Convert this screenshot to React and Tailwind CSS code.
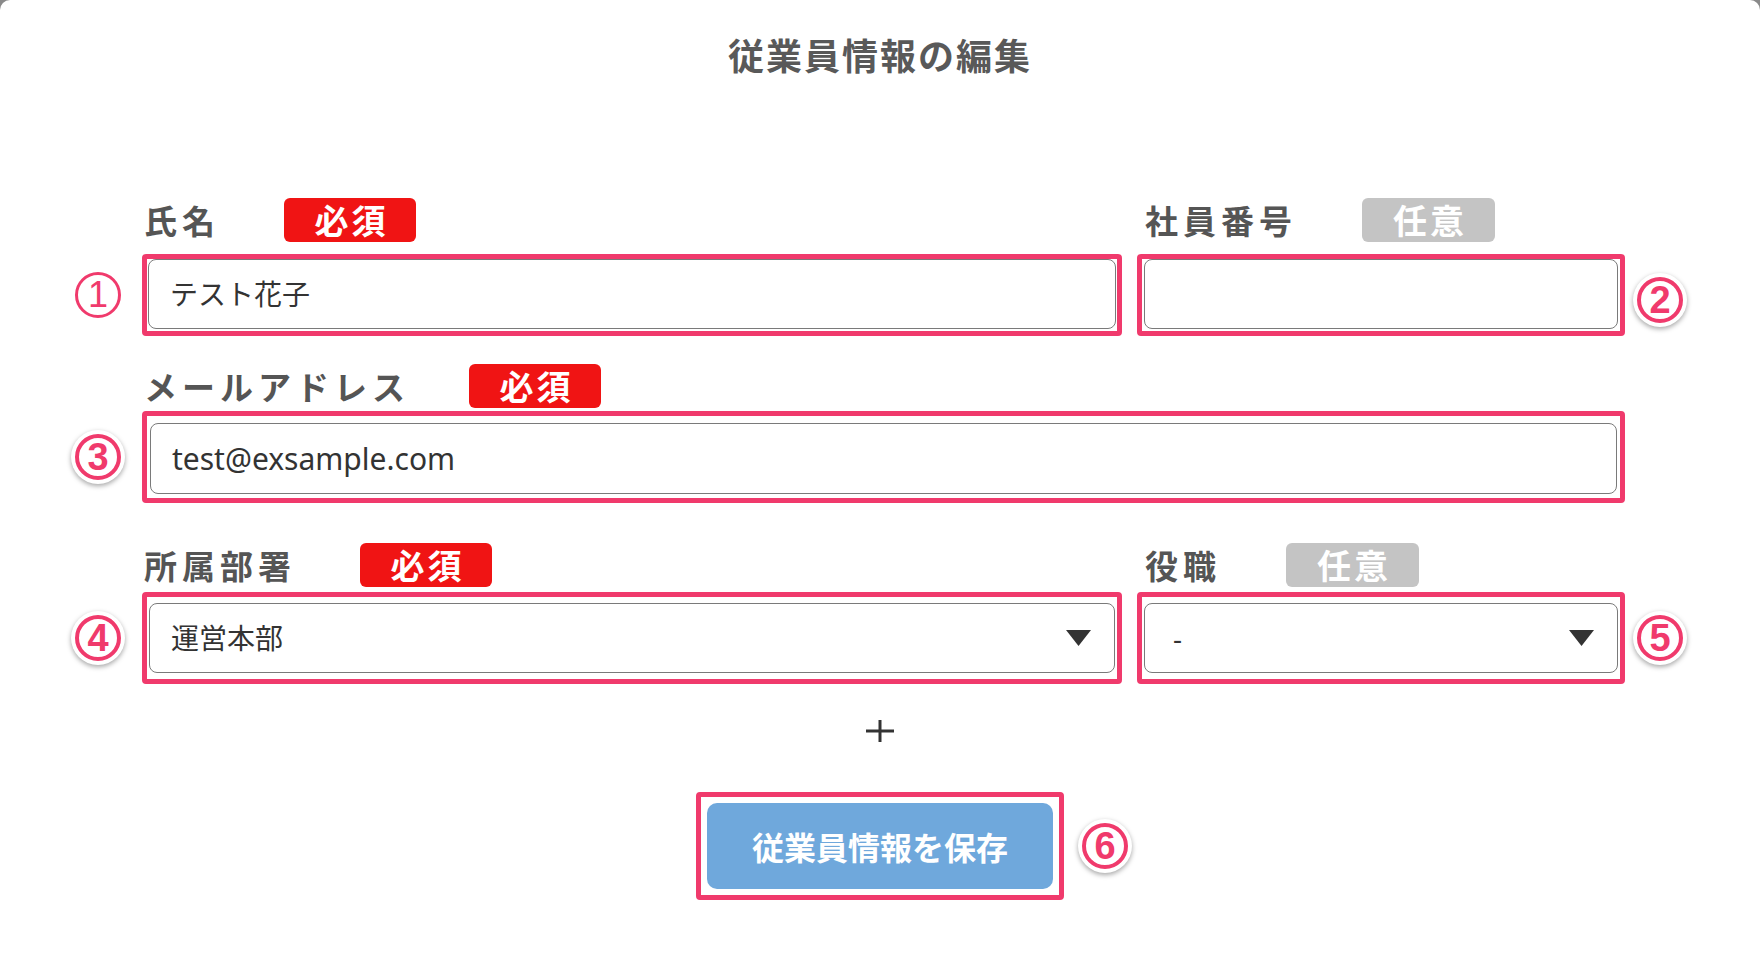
import React from "react";

const CJK = { fontFamily: '"Noto Sans CJK JP", "Noto Sans", sans-serif' };
const INPUT_FONT = { fontFamily: '"Noto Sans", "Noto Sans CJK JP", sans-serif' };
const NUM_FONT = { fontFamily: '"Liberation Sans", Arial, sans-serif' };

function Sticker({ n }) {
  return (
    <div className="w-[54px] h-[54px] rounded-full bg-white shadow-[0_2px_5px_rgba(0,0,0,0.35)] flex items-center justify-center">
      <div
        className="w-[46px] h-[46px] rounded-full border-[4px] border-[#f03a6c] flex items-center justify-center text-[#f03a6c] font-bold text-[38px] leading-none"
        style={NUM_FONT}
      >
        {n}
      </div>
    </div>
  );
}

function ThinCircle({ n }) {
  return (
    <div className="w-[54px] h-[54px] flex items-center justify-center">
      <div
        className="w-[46px] h-[46px] rounded-full border-[3px] border-[#f03a6c] flex items-center justify-center text-[#f03a6c] font-normal text-[36px] leading-none"
        style={NUM_FONT}
      >
        {n}
      </div>
    </div>
  );
}

function Label({ children }) {
  return (
    <span className="text-[33px] leading-none font-bold tracking-[5px] text-[#555555]" style={CJK}>
      {children}
    </span>
  );
}

function Required({ wide }) {
  return (
    <span
      className={
        (wide ? "ml-[59px] " : "ml-[64px] ") +
        "w-[132px] h-[44px] rounded-[6px] bg-[#f01414] text-white text-[34px] leading-none font-bold tracking-[3px] pl-[3px] flex items-center justify-center"
      }
      style={CJK}
    >
      必須
    </span>
  );
}

function Optional() {
  return (
    <span
      className="ml-[65px] w-[133px] h-[44px] rounded-[6px] bg-[#c4c4c4] text-white text-[34px] leading-none font-bold tracking-[3px] pl-[3px] flex items-center justify-center"
      style={CJK}
    >
      任意
    </span>
  );
}

function Arrow() {
  return (
    <svg width="25" height="16" viewBox="0 0 25 16" className="shrink-0">
      <polygon points="0,0 25,0 12.5,16" fill="#333333" />
    </svg>
  );
}

export default function App() {
  return (
    <div className="w-[1760px] h-[960px] bg-[#8a8a8a] overflow-hidden">
      <div className="h-full bg-white rounded-t-[10px] flex flex-col">
        <h1
          className="pt-[36px] text-center text-[36px] leading-none font-bold tracking-[2px] text-[#595959]"
          style={CJK}
        >
          従業員情報の編集
        </h1>

        <div className="ml-[71px] flex flex-col">
          {/* Label row 1 */}
          <div className="mt-[126px] flex">
            <div className="w-[54px] shrink-0" />
            <div className="ml-[17px] w-[980px] flex items-center pl-[2px]">
              <Label>氏名</Label>
              <Required />
            </div>
            <div className="ml-[15px] w-[488px] flex items-center pl-[8px]">
              <Label>社員番号</Label>
              <Optional />
            </div>
          </div>

          {/* Field row 1 */}
          <div className="mt-[12px] flex items-center">
            <div className="w-[54px] shrink-0">
              <ThinCircle n="1" />
            </div>
            <div className="ml-[17px] w-[980px] h-[82px] border-[5px] border-[#f03a6c] rounded-[4px] pt-0 pb-[2px] px-[1px]">
              <div
                className="h-[70px] border border-[#7a7a7a] rounded-[8px] bg-white flex items-center pl-[21px] text-[28px] text-[#333333]"
                style={INPUT_FONT}
              >
                テスト花子
              </div>
            </div>
            <div className="ml-[15px] w-[488px] h-[82px] border-[5px] border-[#f03a6c] rounded-[4px] pt-0 pb-[2px] px-[2px]">
              <div className="h-[70px] border border-[#7a7a7a] rounded-[8px] bg-white" />
            </div>
            <div className="ml-[8px] w-[54px] shrink-0 mt-[10px]">
              <Sticker n="2" />
            </div>
          </div>

          {/* Label row 2 */}
          <div className="mt-[28px] flex">
            <div className="w-[54px] shrink-0" />
            <div className="ml-[17px] flex items-center pl-[2px]">
              <Label>メールアドレス</Label>
              <Required wide />
            </div>
          </div>

          {/* Field row 2 */}
          <div className="mt-[3px] flex items-center">
            <div className="w-[54px] shrink-0">
              <Sticker n="3" />
            </div>
            <div className="ml-[17px] w-[1483px] h-[92px] border-[5px] border-[#f03a6c] rounded-[4px] pt-[7px] pb-[4px] px-[3px]">
              <div
                className="h-[71px] border border-[#7a7a7a] rounded-[8px] bg-white flex items-center pl-[21px] text-[30px] text-[#333333]"
                style={INPUT_FONT}
              >
                test@exsample.com
              </div>
            </div>
          </div>

          {/* Label row 3 */}
          <div className="mt-[40px] flex">
            <div className="w-[54px] shrink-0" />
            <div className="ml-[17px] w-[980px] flex items-center pl-[2px]">
              <Label>所属部署</Label>
              <Required />
            </div>
            <div className="ml-[15px] w-[488px] flex items-center pl-[8px]">
              <Label>役職</Label>
              <Optional />
            </div>
          </div>

          {/* Field row 3 */}
          <div className="mt-[5px] flex items-center">
            <div className="w-[54px] shrink-0">
              <Sticker n="4" />
            </div>
            <div className="ml-[17px] w-[980px] h-[92px] border-[5px] border-[#f03a6c] rounded-[4px] py-[6px] px-[2px]">
              <div
                className="h-[70px] border border-[#7a7a7a] rounded-[8px] bg-white flex items-center justify-between pl-[21px] pr-[23px] text-[28px] text-[#333333]"
                style={INPUT_FONT}
              >
                <span>運営本部</span>
                <Arrow />
              </div>
            </div>
            <div className="ml-[15px] w-[488px] h-[92px] border-[5px] border-[#f03a6c] rounded-[4px] py-[6px] px-[2px]">
              <div
                className="h-[70px] border border-[#7a7a7a] rounded-[8px] bg-white flex items-center justify-between pl-[28px] pr-[23px] text-[28px] text-[#333333]"
                style={INPUT_FONT}
              >
                <span>-</span>
                <Arrow />
              </div>
            </div>
            <div className="ml-[8px] w-[54px] shrink-0">
              <Sticker n="5" />
            </div>
          </div>
        </div>

        {/* Plus */}
        <div className="mt-[36px] flex justify-center">
          <svg width="28" height="22" viewBox="0 0 28 22">
            <line x1="0" y1="11" x2="28" y2="11" stroke="#333333" strokeWidth="3" />
            <line x1="14" y1="0" x2="14" y2="22" stroke="#333333" strokeWidth="3" />
          </svg>
        </div>

        {/* Save button */}
        <div className="mt-[50px] grid grid-cols-[1fr_auto_1fr] items-center">
          <div />
          <div className="border-[5px] border-[#f03a6c] rounded-[4px] p-[6px]">
            <button
              className="w-[346px] h-[86px] rounded-[10px] bg-[#6fa8dc] text-white text-[32px] leading-none font-bold flex items-center justify-center"
              style={CJK}
            >
              従業員情報を保存
            </button>
          </div>
          <div className="pl-[14px] flex">
            <Sticker n="6" />
          </div>
        </div>
      </div>
    </div>
  );
}
